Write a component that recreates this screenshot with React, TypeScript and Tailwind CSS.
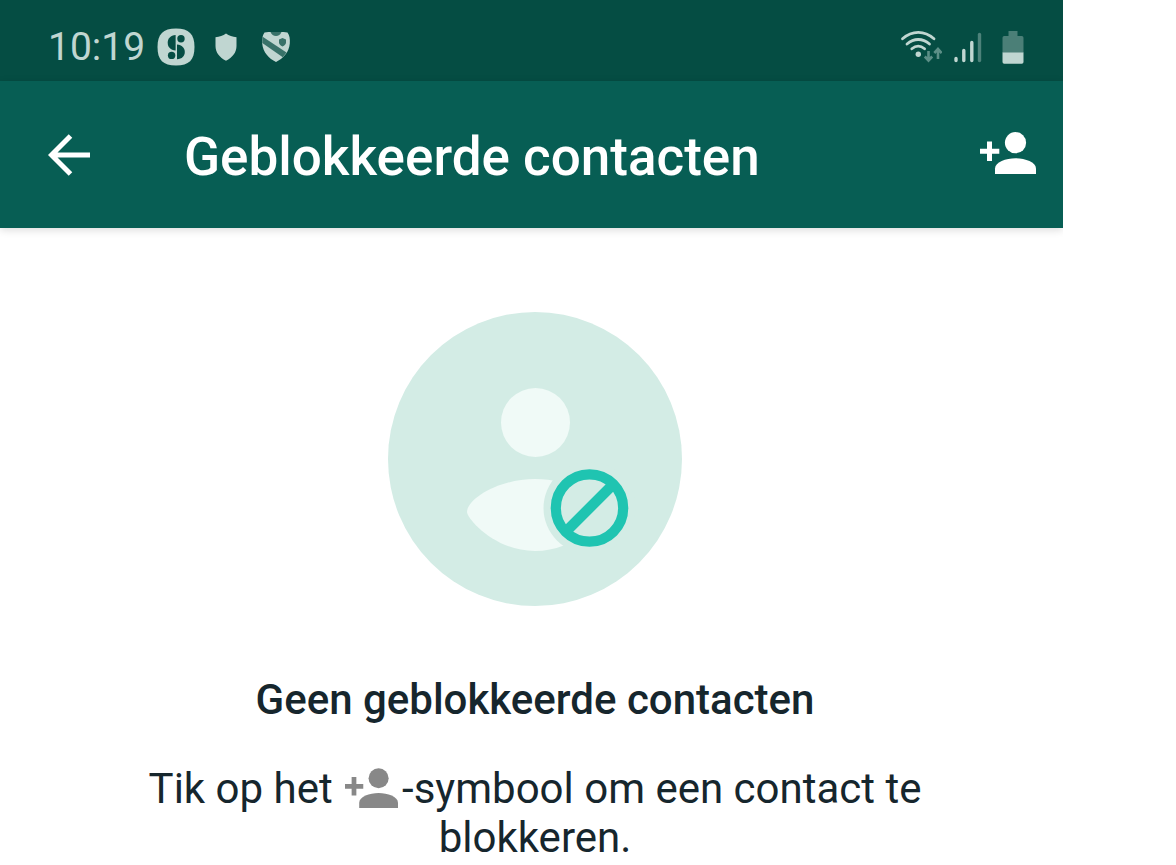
interface IconProps {
  className?: string;
}

function AddPersonIcon({ className }: IconProps) {
  return (
    <svg viewBox="0 0 56 42" fill="currentColor" className={className} aria-hidden="true">
      <path d="M7 9.5h5v7.2h7.3v5H12V29H7v-7.3H0v-5h7z" />
      <circle cx="35.5" cy="10.7" r="10.6" />
      <path d="M15 42v-5.5C15 30 26 26.2 35.5 26.2S56 30 56 36.5V42z" />
    </svg>
  );
}

function BackIcon() {
  return (
    <svg viewBox="0 0 42 42" className="h-[42px] w-[42px]" fill="none" stroke="currentColor" strokeWidth="5" aria-hidden="true">
      <path d="M42 21H4M22.5 2L3.5 21l19 19" />
    </svg>
  );
}

function AppBadgeIcon() {
  return (
    <svg viewBox="0 0 38 38" className="h-[38px] w-[38px]" aria-hidden="true">
      <path
        d="M19 .5C32 .5 37.5 6 37.5 19S32 37.5 19 37.5.5 32 .5 19 6 .5 19 .5z"
        fill="#c0d6d1"
      />
      <g fill="#054d43">
        <path d="M18.6 7v15.500C13.500 22 10.700 18.800 10.700 14.700S13.500 7.300 18.600 7z" />
        <path d="M20 16.500c5 .5 7.800 3.500 7.800 7.400s-2.800 7-7.800 7.300z" />
        <circle cx="24" cy="10.8" r="3.7" />
        <circle cx="14.6" cy="27.4" r="3.7" />
      </g>
    </svg>
  );
}

function ShieldIcon() {
  return (
    <svg viewBox="0 0 22 28" className="h-7 w-[22px]" fill="#c0d6d1" aria-hidden="true">
      <path d="M11 .5c3 2.200 6.500 3.200 10.500 3.700V13c0 6.500-4 11.500-10.500 14.700C4.500 24.500.5 19.500.5 13V4.200C4.500 3.700 8 2.700 11 .5z" />
    </svg>
  );
}

function StripedShieldIcon() {
  return (
    <svg viewBox="0 0 30 32" className="h-8 w-[30px]" aria-hidden="true">
      <path
        d="M3.500 1.500C8 .8 11 1 15 1s7-.2 11.500.5C28.500 4 29.200 8 28.800 12.500 28 21.500 22 27.500 15 31 8 27.500 2 21.500 1.200 12.500.8 8 1.500 4 3.500 1.500z"
        fill="#c0d6d1"
      />
      <path d="M9.500 1h11c-1 2.700-3 4-5.500 4s-4.500-1.300-5.500-4z" fill="#387269" />
      <path d="M1.300 5.500L25.500 21.500l-3.700 4.800L1.300 12z" fill="#387269" />
      <path d="M18 8.500l3.500-1.500L25 8.500v3c0 1.800-1.500 3-3.500 4-2-1-3.500-2.200-3.500-4z" fill="#387269" />
    </svg>
  );
}

function WifiIcon() {
  return (
    <svg viewBox="0 0 42 33" className="h-[33px] w-[42px]" fill="none" aria-hidden="true">
      <g stroke="#c0d6d1" strokeWidth="2.8" strokeLinecap="round">
        <path d="M2.500 8.700C12 .2 24.500.2 34 8.700" />
        <path d="M7 14c7-6 15.500-6 22.500 0" />
        <path d="M11.800 18.800c4-3.400 8.800-3.400 12.800 0" />
      </g>
      <circle cx="18.3" cy="24.2" r="2.7" fill="#c0d6d1" />
      <g stroke="#5c8f87" strokeWidth="2.6">
        <path d="M28.500 21v9M24.800 26.500l3.700 4 3.700-4" />
        <path d="M38 29v-9M34.300 23l3.700-4 3.700 4" />
      </g>
    </svg>
  );
}

function SignalIcon() {
  return (
    <svg viewBox="0 0 28 32" className="h-8 w-7" strokeWidth="3.4" strokeLinecap="round" aria-hidden="true">
      <path d="M2 27.500v2M9.800 19.500v10M17.800 11.500v18" stroke="#c0d6d1" />
      <path d="M25.500 3.500v26" stroke="#4d827a" />
    </svg>
  );
}

function BatteryIcon() {
  return (
    <svg viewBox="0 0 22 34" className="h-[34px] w-[22px]" aria-hidden="true">
      <path d="M6.500 1h9v5h4.300a1.700 1.700 0 0 1 1.700 1.700V23H.5V7.700A1.700 1.700 0 0 1 2.200 6h4.300z" fill="#4b7f77" />
      <path d="M.5 22.500h21v9.500a1.700 1.700 0 0 1-1.700 1.700H2.200A1.700 1.700 0 0 1 .5 32z" fill="#c0d6d1" />
    </svg>
  );
}

function BlockedIllustration() {
  return (
    <svg viewBox="0 0 294 294" className="h-[294px] w-[294px]" aria-hidden="true">
      <circle cx="147" cy="147" r="147" fill="#d3ece5" />
      <circle cx="147.5" cy="110.500" r="34.5" fill="#f0faf7" />
      <path
        d="M79 200c0-13 32-33 68-33 37 0 69 19 69 33 0 6-28 39-69 39s-68-33-68-39z"
        fill="#f0faf7"
      />
      <circle cx="201.5" cy="196" r="46" fill="#d3ece5" />
      <circle cx="201.5" cy="196" r="33.7" fill="none" stroke="#1fc4b1" strokeWidth="10.2" />
      <path d="M177.500 220l48-48" stroke="#1fc4b1" strokeWidth="10.5" />
    </svg>
  );
}

function StatusBar() {
  return (
    <div className="flex h-[81px] items-center bg-[#054d43] pt-3 pr-[39px] pl-12">
      <span className="text-[39px] leading-[46px] text-[#c0d6d1]">10:19</span>
      <div className="ml-3 flex items-center">
        <AppBadgeIcon />
        <div className="ml-5 flex items-center gap-6">
          <ShieldIcon />
          <StripedShieldIcon />
        </div>
      </div>
      <div className="ml-auto flex items-center">
        <WifiIcon />
        <div className="ml-3 flex items-center gap-5">
          <SignalIcon />
          <BatteryIcon />
        </div>
      </div>
    </div>
  );
}

function AppBar() {
  return (
    <header className="flex h-[147px] items-center bg-[#075e54] pr-[27px] pl-12 text-white shadow-[0_2px_8px_rgba(0,0,0,0.14)]">
      <button type="button" aria-label="Terug">
        <BackIcon />
      </button>
      <h1 className="ml-[94px] pt-1 text-[53px] leading-[60px] font-medium whitespace-nowrap">
        Geblokkeerde contacten
      </h1>
      <button type="button" aria-label="Contact toevoegen" className="ml-auto pb-1">
        <AddPersonIcon className="h-[42px] w-14" />
      </button>
    </header>
  );
}

export default function App() {
  return (
    <div className="bg-white pr-[113px] font-[Roboto,sans-serif]">
      <div className="overflow-hidden">
        <StatusBar />
        <AppBar />
        <main className="flex flex-col items-center pt-[84px] pl-[7px] text-center text-[#16262d]">
          <BlockedIllustration />
          <h2 className="mt-[69px] text-[42px] leading-[49px] font-medium">
            Geen geblokkeerde contacten
          </h2>
          <p className="mt-10 max-w-[860px] text-[42px] leading-[49px]">
            Tik op het{' '}
            <AddPersonIcon className="mr-1 ml-0.5 inline-block h-10 w-[53px] align-[-5px] text-[#888888]" />
            -symbool om een contact te blokkeren.
          </p>
        </main>
      </div>
    </div>
  );
}
